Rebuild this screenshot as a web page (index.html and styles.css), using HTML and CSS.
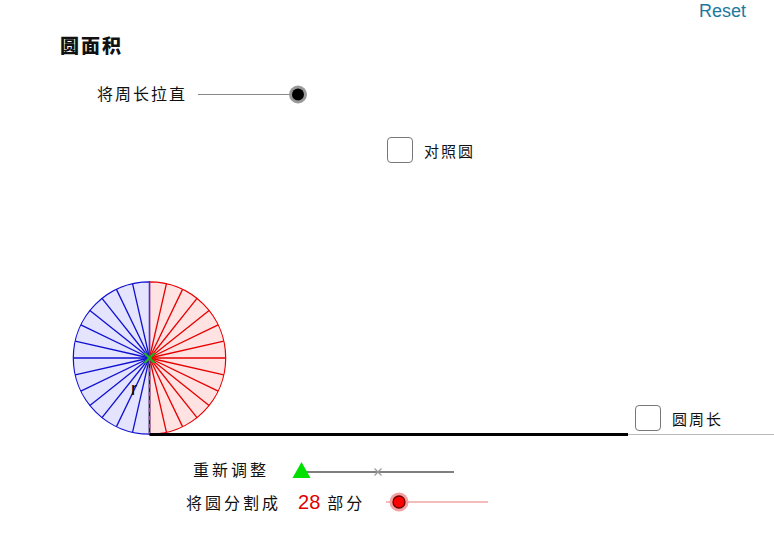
FILE: index.html
```html
<!DOCTYPE html>
<html lang="zh">
<head>
    <meta charset="UTF-8">
    <title>圆面积</title>
    <link rel="stylesheet" href="styles.css">
</head>
<body>
    <div class="applet">
        <svg class="board" width="774" height="540" viewBox="0 0 774 540">
            <!-- 滑动条：将周长拉直 -->
            <line x1="198" y1="94.5" x2="298" y2="94.5" stroke="#888" stroke-width="1.2"/>
            <circle cx="298" cy="94.5" r="9" fill="#999"/>
            <circle cx="298" cy="94.5" r="6" fill="#000"/>

            <!-- 圆 -->
            <path d="M149.5 281.8 A76.2 76.2 0 0 1 149.5 434.2 Z" fill="#ffe2e2" stroke="#e60000" stroke-width="1.2"/>
            <path d="M149.5 434.2 A76.2 76.2 0 0 1 149.5 281.8 Z" fill="#e4e4ff" stroke="#1010d0" stroke-width="1.2"/>
            <defs>
                <line id="spoke" x1="149.5" y1="358" x2="149.5" y2="281.8" stroke-width="1.3"/>
            </defs>
            <g stroke="#e60000">
                <use href="#spoke" transform="rotate(12.857 149.5 358)"/>
                <use href="#spoke" transform="rotate(25.714 149.5 358)"/>
                <use href="#spoke" transform="rotate(38.571 149.5 358)"/>
                <use href="#spoke" transform="rotate(51.429 149.5 358)"/>
                <use href="#spoke" transform="rotate(64.286 149.5 358)"/>
                <use href="#spoke" transform="rotate(77.143 149.5 358)"/>
                <use href="#spoke" transform="rotate(90 149.5 358)"/>
                <use href="#spoke" transform="rotate(102.857 149.5 358)"/>
                <use href="#spoke" transform="rotate(115.714 149.5 358)"/>
                <use href="#spoke" transform="rotate(128.571 149.5 358)"/>
                <use href="#spoke" transform="rotate(141.429 149.5 358)"/>
                <use href="#spoke" transform="rotate(154.286 149.5 358)"/>
                <use href="#spoke" transform="rotate(167.143 149.5 358)"/>
            </g>
            <g stroke="#1010d0">
                <use href="#spoke" transform="rotate(-12.857 149.5 358)"/>
                <use href="#spoke" transform="rotate(-25.714 149.5 358)"/>
                <use href="#spoke" transform="rotate(-38.571 149.5 358)"/>
                <use href="#spoke" transform="rotate(-51.429 149.5 358)"/>
                <use href="#spoke" transform="rotate(-64.286 149.5 358)"/>
                <use href="#spoke" transform="rotate(-77.143 149.5 358)"/>
                <use href="#spoke" transform="rotate(-90 149.5 358)"/>
                <use href="#spoke" transform="rotate(-102.857 149.5 358)"/>
                <use href="#spoke" transform="rotate(-115.714 149.5 358)"/>
                <use href="#spoke" transform="rotate(-128.571 149.5 358)"/>
                <use href="#spoke" transform="rotate(-141.429 149.5 358)"/>
                <use href="#spoke" transform="rotate(-154.286 149.5 358)"/>
                <use href="#spoke" transform="rotate(-167.143 149.5 358)"/>
            </g>
            <line x1="149.5" y1="358" x2="149.5" y2="281.8" stroke="#6a2aa8" stroke-width="1.4"/>
            <!-- 半径 r -->
            <line x1="149.5" y1="358" x2="149.5" y2="434" stroke="#222" stroke-width="1.6"/>
            <line x1="149.5" y1="360" x2="149.5" y2="434" stroke="#b040b0" stroke-width="1.6" stroke-dasharray="4 4"/>
            <!-- 圆心 -->
            <g stroke="#22b022" stroke-width="2.4">
                <line x1="144.5" y1="353" x2="154.5" y2="363"/>
                <line x1="154.5" y1="353" x2="144.5" y2="363"/>
            </g>

            <!-- 周长 -->
            <line x1="628" y1="434.5" x2="774" y2="434.5" stroke="#bbb" stroke-width="1.2"/>
            <line x1="149.5" y1="434.5" x2="628" y2="434.5" stroke="#000" stroke-width="3.2"/>

            <!-- 滑动条：重新调整 -->
            <line x1="306" y1="472" x2="454" y2="472" stroke="#555" stroke-width="1.3"/>
            <g stroke="#999" stroke-width="1.3">
                <line x1="374.5" y1="468.5" x2="381.5" y2="475.5"/>
                <line x1="381.5" y1="468.5" x2="374.5" y2="475.5"/>
            </g>
            <polygon points="301.5,462 310.5,478 292.5,478" fill="#00e000"/>

            <!-- 滑动条：分割数 -->
            <line x1="386" y1="502" x2="488" y2="502" stroke="#ec7a7a" stroke-width="1.2"/>
            <circle cx="399" cy="502" r="9.5" fill="#f4a0a0"/>
            <circle cx="399" cy="502" r="6" fill="#ff0000" stroke="#6a0000" stroke-width="1.3"/>
        </svg>

        <a class="reset">Reset</a>
        <h1 class="title">圆面积</h1>
        <span class="label straighten">将周长拉直</span>

        <div class="check compare"><span class="box"></span><span class="label-sm">对照圆</span></div>
        <div class="check perimeter"><span class="box"></span><span class="label-sm">圆周长</span></div>

        <span class="radius">r</span>

        <span class="label adjust">重新调整</span>
        <div class="label split">
            <span>将圆分割成</span>
            <span class="count">28</span>
            <span>部分</span>
        </div>
    </div>
</body>
</html>
```

FILE: styles.css
```css
body {
    margin: 0;
    background-color: #fff;
    font-family: "Noto Sans CJK SC", "Liberation Sans", sans-serif;
    color: #111;
}
.applet {
    position: relative;
    width: 774px;
    height: 540px;
    overflow: hidden;
}
.board {
    position: absolute;
    left: 0;
    top: 0;
}
.reset {
    position: absolute;
    left: 699px;
    top: 0;
    font-family: "Liberation Sans", Arial, sans-serif;
    font-size: 18px;
    line-height: 22px;
    color: #1d78a0;
}
.title {
    position: absolute;
    left: 60px;
    top: 33px;
    margin: 0;
    font-size: 19px;
    line-height: 24px;
    font-weight: 900;
    letter-spacing: 2px;
}
.label {
    position: absolute;
    font-size: 16px;
    line-height: 20px;
    letter-spacing: 2px;
}
.straighten {
    left: 97px;
    top: 83px;
}
.adjust {
    left: 193px;
    top: 459px;
    letter-spacing: 3px;
}
.split {
    left: 186px;
    top: 492px;
    display: flex;
    align-items: center;
    letter-spacing: 3px;
}
.split .count {
    font-family: "Liberation Sans", Arial, sans-serif;
    font-size: 20px;
    color: #e00000;
    letter-spacing: 0;
    margin: 0 7px 0 17px;
}
.check {
    position: absolute;
    display: flex;
    align-items: center;
    gap: 11px;
}
.compare {
    left: 387px;
    top: 137px;
}
.perimeter {
    left: 635px;
    top: 405px;
}
.box {
    width: 24px;
    height: 24px;
    border: 1.5px solid #777;
    border-radius: 4px;
    background-color: #fff;
}
.label-sm {
    font-size: 15px;
    letter-spacing: 2px;
}
.radius {
    position: absolute;
    left: 131px;
    top: 379px;
    font-family: "Liberation Sans", Arial, sans-serif;
    font-size: 18px;
    line-height: 20px;
    color: #000;
}
```
